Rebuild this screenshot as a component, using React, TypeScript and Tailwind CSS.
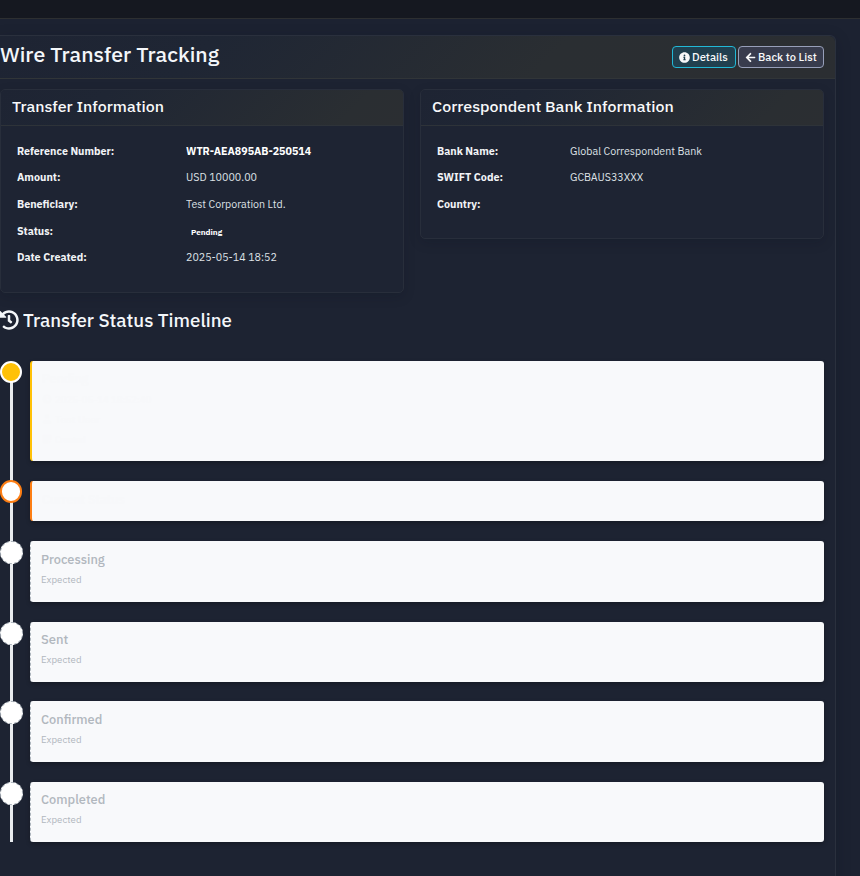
import { FaHistory, FaInfoCircle, FaArrowLeft, FaClock, FaUser, FaStickyNote } from "react-icons/fa";
import type { ReactNode } from "react";

type TextProps = { children: ReactNode; width: number; className?: string };

/* Single line of text fitted to a fixed advance width. */
function Fit({ children, width, className = "" }: TextProps) {
  return (
    <span
      className={`inline-block origin-left whitespace-nowrap ${className}`}
      ref={(el) => {
        if (!el) return;
        const natural = el.offsetWidth;
        if (natural > 0) el.style.transform = `scaleX(${width / natural})`;
      }}
    >
      {children}
    </span>
  );
}

type Row = { label: string; lw: number; value?: string; vw?: number; kind?: "bold" | "badge" };

const transferRows: Row[] = [
  { label: "Reference Number:", lw: 97.5, value: "WTR-AEA895AB-250514", vw: 125, kind: "bold" },
  { label: "Amount:", lw: 43.5, value: "USD 10000.00", vw: 71 },
  { label: "Beneficiary:", lw: 61, value: "Test Corporation Ltd.", vw: 100 },
  { label: "Status:", lw: 36, value: "Pending", vw: 31.5, kind: "badge" },
  { label: "Date Created:", lw: 69.5, value: "2025-05-14 18:52", vw: 91 },
];

const bankRows: Row[] = [
  { label: "Bank Name:", lw: 61, value: "Global Correspondent Bank", vw: 131.5 },
  { label: "SWIFT Code:", lw: 66, value: "GCBAUS33XXX", vw: 73.5 },
  { label: "Country:", lw: 43.5 },
];

function InfoCard({ title, tw, rows, labelClass, className }: { title: string; tw: number; rows: Row[]; labelClass: string; className: string }) {
  return (
    <section className={`overflow-hidden rounded-[5px] border border-[#282e3b] bg-[#1e2433] shadow-[0_4px_12px_rgba(10,15,28,0.15)] ${className}`}>
      <div className="h-9 border-b border-[#2e3339] bg-[linear-gradient(135deg,#1e2433_0%,#1f2634_25%,#2a2e32_85%,#2b2e32_100%)] pl-[11px] text-[15.5px] leading-[32px] font-medium text-[#f8f9fa]">
        <Fit width={tw}>{title}</Fit>
      </div>
      <div className="pt-[11px] pl-4 text-[11.6px] leading-[17px]">
        {rows.map((row) => (
          <div key={row.label} className="flex h-[26.6px] items-center">
            <div className={`font-bold text-[#f1f3f6] ${labelClass}`}>
              <Fit width={row.lw}>{row.label}</Fit>
            </div>
            {row.value && (
              <Fit
                width={row.vw ?? 0}
                className={row.kind === "bold" ? "font-bold text-white" : row.kind === "badge" ? "ml-[5px] pt-[5px] text-[8px] font-bold text-white" : "text-[#dfe2e7]"}
              >
                {row.value}
              </Fit>
            )}
          </div>
        ))}
      </div>
    </section>
  );
}

const upcoming = [
  { name: "Processing", w: 64, size: "h-[61px]", gap: "mb-5", pad: "pt-[10px]" },
  { name: "Sent", w: 27, size: "h-[60px]", gap: "mb-[19px]", pad: "pt-[9px]" },
  { name: "Confirmed", w: 61, size: "h-[61px]", gap: "mb-5", pad: "pt-[10px]" },
  { name: "Completed", w: 64, size: "h-[60px]", gap: "", pad: "pt-[9px]" },
];

const cardClass = "ml-2 flex-1 rounded-[3px] bg-[#f8f9fb] shadow-[0_2px_4px_rgba(0,0,0,0.25)]";

export default function App() {
  return (
    <div className="h-[876px] w-[860px] overflow-hidden bg-[#1c2231] font-['IBM_Plex_Sans','Roboto','Liberation_Sans',sans-serif]">
      <div className="h-[19px] border-b border-[#2d2f31] bg-[#151820]" />
      <main className="mt-4 h-[860px] w-[836px] rounded-tr-md border-t border-r border-[#2a303d] bg-[#1d2332] shadow-[0_4px_16px_rgba(10,15,28,0.2)]">
        <header className="flex h-[43px] items-center justify-between rounded-tr-md border-b border-[#313538] bg-[linear-gradient(135deg,#1e2433_0%,#1f2634_25%,#2a2e32_65%,#2b2e32_100%)] pr-[11px]">
          <h1 className="-mt-1.5 text-[21px] leading-[32px] font-medium text-[#f4f7fa]">
            <Fit width={219}>Wire Transfer Tracking</Fit>
          </h1>
          <div className="flex gap-0.5 text-[11.2px] font-medium text-[#f8f9fa]">
            <button className="flex h-[22px] w-16 items-center rounded-[4px] border border-[#22b8d6] bg-[#21404f] pl-1.5">
              <FaInfoCircle className="mr-[2px] size-[11px] shrink-0" />
              <Fit width={36} className="pt-px">Details</Fit>
            </button>
            <button className="flex h-[22px] w-[86px] items-center rounded-[4px] border border-[#979fb9] bg-[#383c4d] pl-1.5">
              <FaArrowLeft className="mr-[2px] size-[11px] shrink-0" />
              <Fit width={58.5} className="pt-px">Back to List</Fit>
            </button>
          </div>
        </header>

        <div className="mt-[10px] flex items-start gap-4">
          <InfoCard title="Transfer Information" tw={151.5} rows={transferRows} labelClass="w-[168.5px]" className="h-[204px] w-[404px]" />
          <InfoCard title="Correspondent Bank Information" tw={241.5} rows={bankRows} labelClass="w-[133px]" className="h-[150px] w-[404px]" />
        </div>

        <h2 className="mt-4 flex h-6 items-center text-[18.5px] leading-[28px] font-medium text-[#f4f7fa]">
          <FaHistory className="-mt-0.5 mr-1 -ml-px size-5 shrink-0" />
          <Fit width={209} className="-mt-[3px]">Transfer Status Timeline</Fit>
        </h2>

        <div className="relative mt-[28px] w-[824px]">
          <div className="absolute top-[10px] bottom-0 left-[10px] w-[3px] bg-[#e9ecef]" />
          <div className="relative mb-5 flex h-[100px]">
            <div className="size-[22px] rounded-full border-2 border-white bg-[#ffc107]" />
            <div className={`${cardClass} border-l-2 border-[#ffc107] pt-[9px] pl-[10px] text-[10px] text-[#f7f8fa]`}>
              <div className="h-[19px] text-[13px] leading-[18px] font-medium"><Fit width={46}>Pending</Fit></div>
              <div className="flex h-5 items-center gap-[3px]"><FaClock /><Fit width={96}>2025-05-14 18:52:40</Fit></div>
              <div className="flex h-5 items-center gap-[3px]"><FaUser /><Fit width={45}>Test User</Fit></div>
              <div className="flex h-5 items-center gap-[3px]"><FaStickyNote /><Fit width={30}>Created</Fit></div>
            </div>
          </div>
          <div className="relative mb-5 flex h-10">
            <div className="-mt-px h-[23px] w-[22px] rounded-full border-2 border-[#fd7e14] bg-white" />
            <div className={`${cardClass} border-l-2 border-[#fd7e14] pt-[10px] pl-[10px] text-[13px] leading-[18px] font-medium text-[#f7f8fa]`}>
              <Fit width={83}>Current Status</Fit>
            </div>
          </div>
          {upcoming.map((step) => (
            <div key={step.name} className={`relative flex ${step.size} ${step.gap}`}>
              <div className="-mr-px size-[23px] rounded-full border border-dashed border-[#adb5bd] bg-white" />
              <div className={`${cardClass} border-l border-dashed border-[#adb5bd] ${step.pad} pl-[10px] text-[#b1b7be]`}>
                <div className="h-[19px] text-[13px] leading-[18px] font-medium"><Fit width={step.w}>{step.name}</Fit></div>
                <div className="text-[10px] leading-5"><Fit width={40.5}>Expected</Fit></div>
              </div>
            </div>
          ))}
        </div>
      </main>
    </div>
  );
}
